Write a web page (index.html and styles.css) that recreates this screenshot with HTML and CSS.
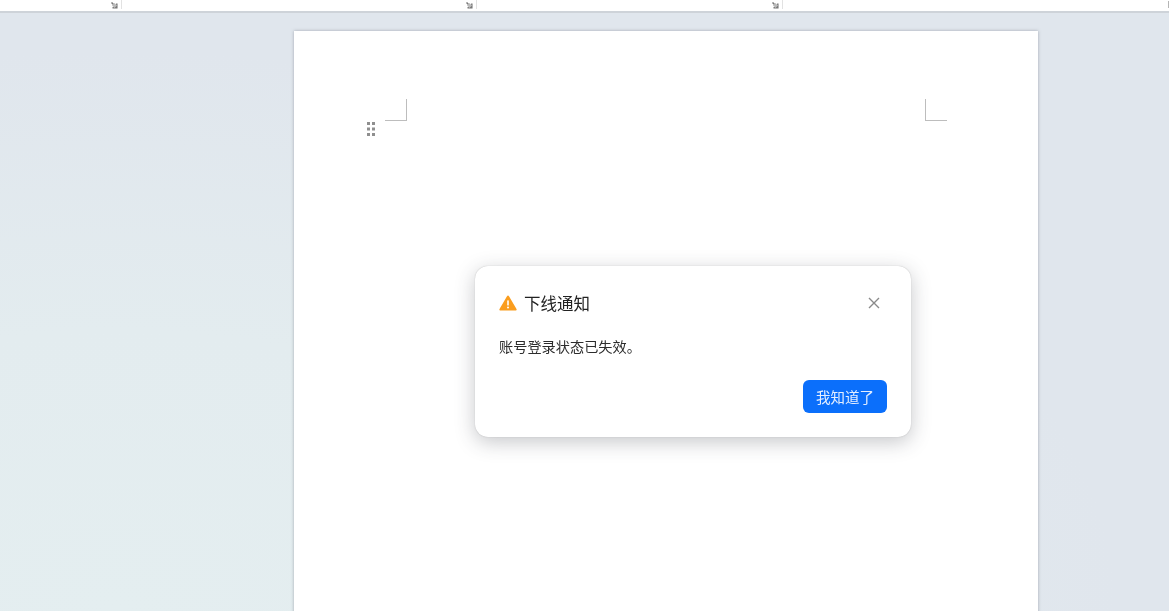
FILE: index.html
```html
<!DOCTYPE html>
<html lang="zh-CN">
<head>
<meta charset="utf-8">
<title>下线通知</title>
<link rel="stylesheet" href="styles.css">
</head>
<body>
<div class="app">
  <header class="ruler">
    <div class="ruler-seg seg-1">
      <svg class="marker" width="7" height="7" viewBox="0 0 7 7" aria-hidden="true"><path d="M.5.5l4.5 4.5M5.8 1.5v4.3H1.5" stroke="#777" stroke-width="1.5" fill="none"/><path d="M1 3.5L3.5 1 6 3.5 3.5 6z" fill="#bbb"/></svg>
      <span class="tick"></span>
    </div>
    <div class="ruler-seg seg-2">
      <svg class="marker" width="7" height="7" viewBox="0 0 7 7" aria-hidden="true"><path d="M.5.5l4.5 4.5M5.8 1.5v4.3H1.5" stroke="#777" stroke-width="1.5" fill="none"/><path d="M1 3.5L3.5 1 6 3.5 3.5 6z" fill="#bbb"/></svg>
      <span class="tick"></span>
    </div>
    <div class="ruler-seg seg-3">
      <svg class="marker" width="7" height="7" viewBox="0 0 7 7" aria-hidden="true"><path d="M.5.5l4.5 4.5M5.8 1.5v4.3H1.5" stroke="#777" stroke-width="1.5" fill="none"/><path d="M1 3.5L3.5 1 6 3.5 3.5 6z" fill="#bbb"/></svg>
      <span class="tick"></span>
    </div>
    <div class="ruler-end"><span class="dots"></span></div>
  </header>
  <main class="canvas">
    <section class="page">
      <div class="margins">
        <span class="corner corner-left"></span>
        <span class="corner corner-right"></span>
      </div>
      <svg class="handle" width="10" height="16" viewBox="0 0 10 16" aria-hidden="true">
        <g fill="#8f8f8f">
          <rect x="1" y="1" width="3" height="3"/><rect x="6" y="1" width="3" height="3"/>
          <rect x="1" y="6.5" width="3" height="3"/><rect x="6" y="6.5" width="3" height="3"/>
          <rect x="1" y="12" width="3" height="3"/><rect x="6" y="12" width="3" height="3"/>
        </g>
      </svg>
    </section>
  </main>
  <div class="dialog" role="dialog">
    <div class="dialog-head">
      <svg class="warn" width="18" height="16" viewBox="0 0 18 16" aria-hidden="true">
        <path d="M9 .6c.4 0 .8.2 1 .6l7.5 12.9c.4.7-.1 1.5-.9 1.5H1.4c-.8 0-1.3-.8-.9-1.5L8 1.2c.2-.4.6-.6 1-.6z" fill="#fa9d1e"/>
        <rect x="8.2" y="5.2" width="1.6" height="5.4" rx=".7" fill="#fff"/>
        <circle cx="9" cy="12.6" r="1" fill="#fff"/>
      </svg>
      <h2 class="dialog-title">下线通知</h2>
      <svg class="close" width="14" height="14" viewBox="0 0 14 14" aria-hidden="true">
        <path d="M2 2l10 10M12 2L2 12" stroke="#8a8a8a" stroke-width="1.4" fill="none"/>
      </svg>
    </div>
    <p class="dialog-body">账号登录状态已失效。</p>
    <div class="dialog-foot"><button class="btn" type="button">我知道了</button></div>
  </div>
</div>
</body>
</html>
```
FILE: styles.css
```css
* { box-sizing: border-box; }
html, body { margin: 0; height: 100%; }
body {
  overflow: hidden;
  font-family: "Noto Sans CJK SC", "Liberation Sans", sans-serif;
}
.app {
  position: relative;
  width: 1169px;
  height: 611px;
  display: flex;
  flex-direction: column;
  overflow: hidden;
  background: radial-gradient(ellipse 1000px 560px at 10% 100%, #e4eef0 0%, #e3ecef 50%, #e0e6ed 100%) #e0e5ed;
}
.ruler {
  flex: none;
  height: 13px;
  display: flex;
  background: #fff;
  border-bottom: 2px solid #ced3d9;
}
.ruler-seg {
  display: flex;
  justify-content: flex-end;
  align-items: flex-start;
}
.seg-1 { width: 122px; }
.seg-2 { width: 355px; }
.seg-3 { width: 306px; }
.ruler-end {
  flex: 1;
  display: flex;
  justify-content: flex-end;
}
.marker {
  margin: 2px 3px 0 0;
  filter: blur(.5px);
}
.tick {
  width: 1px;
  height: 9px;
  background: #e2e2e2;
}
.dots {
  width: 1px;
  height: 7px;
  margin-top: 1px;
  background: #b5b5b5;
}
.canvas {
  flex: 1;
  min-height: 0;
  padding: 18px 131px 0 294px;
}
.page {
  position: relative;
  width: 744px;
  height: 600px;
  padding: 68px 91px 0;
  background: #fff;
  box-shadow: 0 0 3px rgba(120, 125, 135, .6);
}
.margins {
  display: flex;
  justify-content: space-between;
  filter: blur(.5px);
}
.corner {
  width: 22px;
  height: 22px;
  border-bottom: 1px solid #bdbdbd;
}
.corner-left { border-right: 1px solid #bdbdbd; }
.corner-right { border-left: 1px solid #bdbdbd; }
.handle {
  position: absolute;
  left: 72px;
  top: 90px;
  filter: blur(.5px);
}
.dialog {
  position: absolute;
  left: 475px;
  top: 266px;
  width: 436px;
  height: 171px;
  padding: 24px 24px 24px;
  display: flex;
  flex-direction: column;
  background: #fff;
  border-radius: 13px;
  box-shadow: 0 0 1px rgba(90, 90, 90, .45), 0 5px 20px rgba(50, 55, 65, .28);
}
.dialog-head {
  display: flex;
  align-items: center;
  height: 26px;
  gap: 7px;
  margin-top: 0;
}
.warn { flex: none; filter: blur(.4px); }
.dialog-title {
  flex: 1;
  margin: 0;
  font-size: 16.5px;
  font-weight: 400;
  line-height: 26px;
  color: #222;
  filter: blur(.4px);
}
.close { flex: none; margin-right: 6px; filter: blur(.4px); }
.dialog-body {
  margin: 19px 0 0;
  font-size: 14.2px;
  line-height: 22px;
  color: #2c2c2c;
  filter: blur(.4px);
}
.dialog-foot {
  margin-top: auto;
  display: flex;
  justify-content: flex-end;
}
.btn {
  width: 84px;
  height: 33px;
  padding: 0;
  border: 0;
  border-radius: 6px;
  background: #0b6ffb;
  color: #e4eeff;
  font: 14.5px/33px "Noto Sans CJK SC", "Liberation Sans", sans-serif;
  filter: blur(.3px);
}
```
